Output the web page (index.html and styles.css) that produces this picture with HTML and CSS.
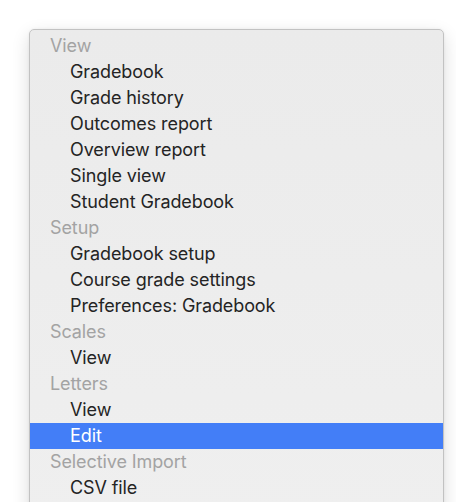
FILE: index.html
```html
<!DOCTYPE html>
<html>
<head>
<meta charset="utf-8">
<link rel="stylesheet" href="styles.css">
</head>
<body>
<div class="menu">
  <div class="group">View</div>
  <div class="item">Gradebook</div>
  <div class="item">Grade history</div>
  <div class="item">Outcomes report</div>
  <div class="item">Overview report</div>
  <div class="item">Single view</div>
  <div class="item">Student Gradebook</div>
  <div class="group">Setup</div>
  <div class="item">Gradebook setup</div>
  <div class="item">Course grade settings</div>
  <div class="item">Preferences: Gradebook</div>
  <div class="group">Scales</div>
  <div class="item">View</div>
  <div class="group">Letters</div>
  <div class="item">View</div>
  <div class="item selected">Edit</div>
  <div class="group">Selective Import</div>
  <div class="item">CSV file</div>
</div>
</body>
</html>
```
FILE: styles.css
```css
html, body {
  margin: 0;
  padding: 0;
  background: #ffffff;
  overflow: hidden;
  height: 502px;
}
body {
  padding: 29px 0 0 29px;
  box-sizing: border-box;
  font-family: Inter, "Noto Sans", "Liberation Sans", sans-serif;
}
.menu {
  width: 415px;
  box-sizing: border-box;
  border: 1px solid #c2c2c2;
  border-radius: 5px;
  background: linear-gradient(#ebebeb, #efefef);
  box-shadow: 0 6px 18px rgba(0, 0, 0, 0.14), 0 0 3px rgba(0, 0, 0, 0.06);
  padding: 3px 0 20px;
}
.group, .item {
  height: 26px;
  line-height: 26px;
  font-size: 18px;
  letter-spacing: -0.1px;
  white-space: nowrap;
}
.group {
  padding-left: 20px;
  color: #a3a3a3;
}
.item {
  padding-left: 40px;
  color: #242424;
}
.item.selected {
  background: #437ef7;
  color: #ffffff;
}
```
